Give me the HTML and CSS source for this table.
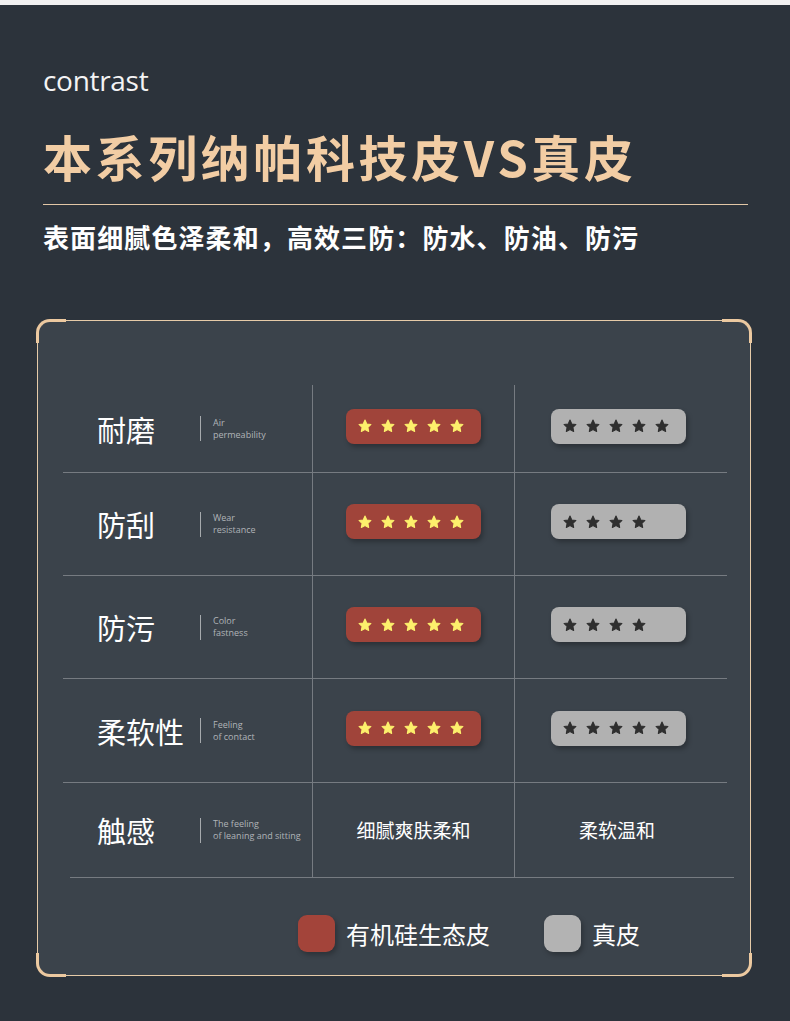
FILE: index.html
```html
<!DOCTYPE html>
<html lang="zh">
<head>
<meta charset="utf-8">
<link rel="stylesheet" href="styles.css">
</head>
<body>
<div class="topstrip"></div>
<header class="head">
  <div class="eyebrow">contrast</div>
  <h1 class="title">本系列纳帕科技皮VS真皮</h1>
  <div class="rule"></div>
  <p class="subtitle">表面细腻色泽柔和，高效三防：防水、防油、防污</p>
</header>

<svg width="0" height="0" class="defs">
  <defs>
    <symbol id="star" viewBox="0 0 24 24">
      <path d="M12 1.8l3.1 6.6 7.1.9-5.2 4.9 1.3 7.1L12 17.9l-6.3 3.4 1.3-7.1L1.8 9.3l7.1-.9z" stroke-linejoin="round"/>
    </symbol>
  </defs>
</svg>

<section class="card">
  <span class="corner tl"></span>
  <span class="corner tr"></span>
  <span class="corner bl"></span>
  <span class="corner br"></span>

  <div class="table">
    <div class="row r1">
      <div class="cell label"><span class="zh">耐磨</span><span class="bar"></span><span class="en">Air<br>permeability</span></div>
      <div class="cell mid"><div class="badge red"><svg class="st"><use href="#star"/></svg><svg class="st"><use href="#star"/></svg><svg class="st"><use href="#star"/></svg><svg class="st"><use href="#star"/></svg><svg class="st"><use href="#star"/></svg></div></div>
      <div class="cell"><div class="badge grey"><svg class="st"><use href="#star"/></svg><svg class="st"><use href="#star"/></svg><svg class="st"><use href="#star"/></svg><svg class="st"><use href="#star"/></svg><svg class="st"><use href="#star"/></svg></div></div>
    </div>
    <div class="row r2">
      <div class="cell label"><span class="zh">防刮</span><span class="bar"></span><span class="en">Wear<br>resistance</span></div>
      <div class="cell mid"><div class="badge red"><svg class="st"><use href="#star"/></svg><svg class="st"><use href="#star"/></svg><svg class="st"><use href="#star"/></svg><svg class="st"><use href="#star"/></svg><svg class="st"><use href="#star"/></svg></div></div>
      <div class="cell"><div class="badge grey"><svg class="st"><use href="#star"/></svg><svg class="st"><use href="#star"/></svg><svg class="st"><use href="#star"/></svg><svg class="st"><use href="#star"/></svg></div></div>
    </div>
    <div class="row r3">
      <div class="cell label"><span class="zh">防污</span><span class="bar"></span><span class="en">Color<br>fastness</span></div>
      <div class="cell mid"><div class="badge red"><svg class="st"><use href="#star"/></svg><svg class="st"><use href="#star"/></svg><svg class="st"><use href="#star"/></svg><svg class="st"><use href="#star"/></svg><svg class="st"><use href="#star"/></svg></div></div>
      <div class="cell"><div class="badge grey"><svg class="st"><use href="#star"/></svg><svg class="st"><use href="#star"/></svg><svg class="st"><use href="#star"/></svg><svg class="st"><use href="#star"/></svg></div></div>
    </div>
    <div class="row r4">
      <div class="cell label"><span class="zh">柔软性</span><span class="bar"></span><span class="en">Feeling<br>of contact</span></div>
      <div class="cell mid"><div class="badge red"><svg class="st"><use href="#star"/></svg><svg class="st"><use href="#star"/></svg><svg class="st"><use href="#star"/></svg><svg class="st"><use href="#star"/></svg><svg class="st"><use href="#star"/></svg></div></div>
      <div class="cell"><div class="badge grey"><svg class="st"><use href="#star"/></svg><svg class="st"><use href="#star"/></svg><svg class="st"><use href="#star"/></svg><svg class="st"><use href="#star"/></svg><svg class="st"><use href="#star"/></svg></div></div>
    </div>
    <div class="row r5">
      <div class="cell label"><span class="zh">触感</span><span class="bar"></span><span class="en">The feeling<br>of leaning and sitting</span></div>
      <div class="cell mid"><span class="txt">细腻爽肤柔和</span></div>
      <div class="cell"><span class="txt last">柔软温和</span></div>
    </div>
    <div class="endline"></div>
  </div>

  <div class="legend">
    <div class="key"><span class="sw red"></span><span class="kt">有机硅生态皮</span></div>
    <div class="key"><span class="sw grey"></span><span class="kt">真皮</span></div>
  </div>
</section>
</body>
</html>
```

FILE: styles.css
```css
* { box-sizing: border-box; }
html, body { margin: 0; padding: 0; }
body {
  width: 790px;
  height: 1021px;
  overflow: hidden;
  background: #2c333b;
  font-family: "Noto Sans CJK SC", "Noto Sans", sans-serif;
  color: #fff;
}
.defs { position: absolute; }
.topstrip { height: 5px; background: #f1f1f1; }

.head { padding: 0 42px 0 43px; }
.eyebrow {
  font-family: "Open Sans", "Noto Sans", sans-serif;
  font-weight: 400;
  font-size: 28px;
  line-height: 34px;
  margin-top: 58px;
  color: #f4f4f4;
  letter-spacing: -0.3px;
}
.title {
  margin: 26px 0 0;
  font-size: 49px;
  line-height: 66px;
  font-weight: 700;
  color: #f2cda4;
  letter-spacing: 3.6px;
  white-space: nowrap;
}
.rule {
  margin-top: 15px;
  height: 1px;
  background: #e2c7a6;
}
.subtitle {
  margin: 15px 0 0;
  font-size: 26px;
  line-height: 34px;
  font-weight: 700;
  letter-spacing: 1.1px;
  color: #fff;
  white-space: nowrap;
}

.card {
  position: relative;
  margin: 66px 0 0 37px;
  width: 714px;
  height: 656px;
  background: #3b434b;
  border: 1px solid #e6cba8;
  border-radius: 13px;
  padding: 64px 0 0 25px;
}
.corner {
  position: absolute;
  width: 30px;
  height: 24px;
  border-color: #ecc9a0;
  border-style: solid;
  border-width: 0;
}
.corner.tl { left: -2px; top: -2px; border-top-width: 3px; border-left-width: 3px; border-top-left-radius: 14px; }
.corner.tr { right: -2px; top: -2px; border-top-width: 3px; border-right-width: 3px; border-top-right-radius: 14px; }
.corner.bl { left: -2px; bottom: -2px; border-bottom-width: 3px; border-left-width: 3px; border-bottom-left-radius: 14px; }
.corner.br { right: -2px; bottom: -2px; border-bottom-width: 3px; border-right-width: 3px; border-bottom-right-radius: 14px; }

.table { width: 671px; }
.row {
  display: grid;
  grid-template-columns: 249px 203px 212px;
  border-bottom: 1px solid rgba(255,255,255,0.3);
  width: 664px;
}
.r1 { height: 88px; }
.r2 { height: 103px; }
.r3 { height: 103px; }
.r4 { height: 104px; }
.r5 { height: 94px; border-bottom: 0; }
.endline { height: 1px; margin-left: 7px; width: 664px; background: rgba(255,255,255,0.3); }

.cell {
  display: flex;
  align-items: center;
  justify-content: center;
}
.cell.mid {
  border-left: 1px solid rgba(255,255,255,0.3);
  border-right: 1px solid rgba(255,255,255,0.3);
}
.cell.label {
  justify-content: flex-start;
  padding-left: 34px;
}
.zh {
  font-size: 29px;
  font-weight: 400;
  width: 103px;
  color: #fff;
  line-height: 40px;
}
.bar {
  width: 1px;
  height: 25px;
  background: rgba(255,255,255,0.55);
  margin-right: 12px;
}
.en {
  font-family: "Open Sans", "Noto Sans", sans-serif;
  font-size: 9px;
  line-height: 12px;
  color: #b0b4b8;
}

.badge {
  width: 135px;
  height: 35px;
  border-radius: 8px;
  display: flex;
  align-items: center;
  gap: 9px;
  padding-left: 12px;
  margin-top: -5px;
  box-shadow: 2px 3px 5px rgba(0,0,0,0.28);
}
.cell:last-child .badge { margin-left: -6px; }
.badge.red { background: #a0443a; }
.badge.grey { background: #b1b1b1; }
.st { width: 14px; height: 14px; }
.red .st { fill: #fdf06c; stroke: #fdf06c; stroke-width: 1.8; }
.grey .st { fill: #2f2f2f; stroke: #2f2f2f; stroke-width: 1.8; }

.txt {
  font-size: 19px;
  color: #fff;
  margin-top: -2px;
}
.txt.last { margin-left: -8px; }

.legend {
  display: flex;
  gap: 54px;
  margin: 37px 0 0 235px;
}
.key { display: flex; align-items: center; gap: 11px; }
.sw {
  width: 37px;
  height: 37px;
  border-radius: 9px;
  box-shadow: 2px 3px 5px rgba(0,0,0,0.25);
}
.sw.red { background: #a3443a; }
.sw.grey { background: #b3b3b3; }
.kt { font-size: 24px; line-height: 34px; color: #fff; }
```
